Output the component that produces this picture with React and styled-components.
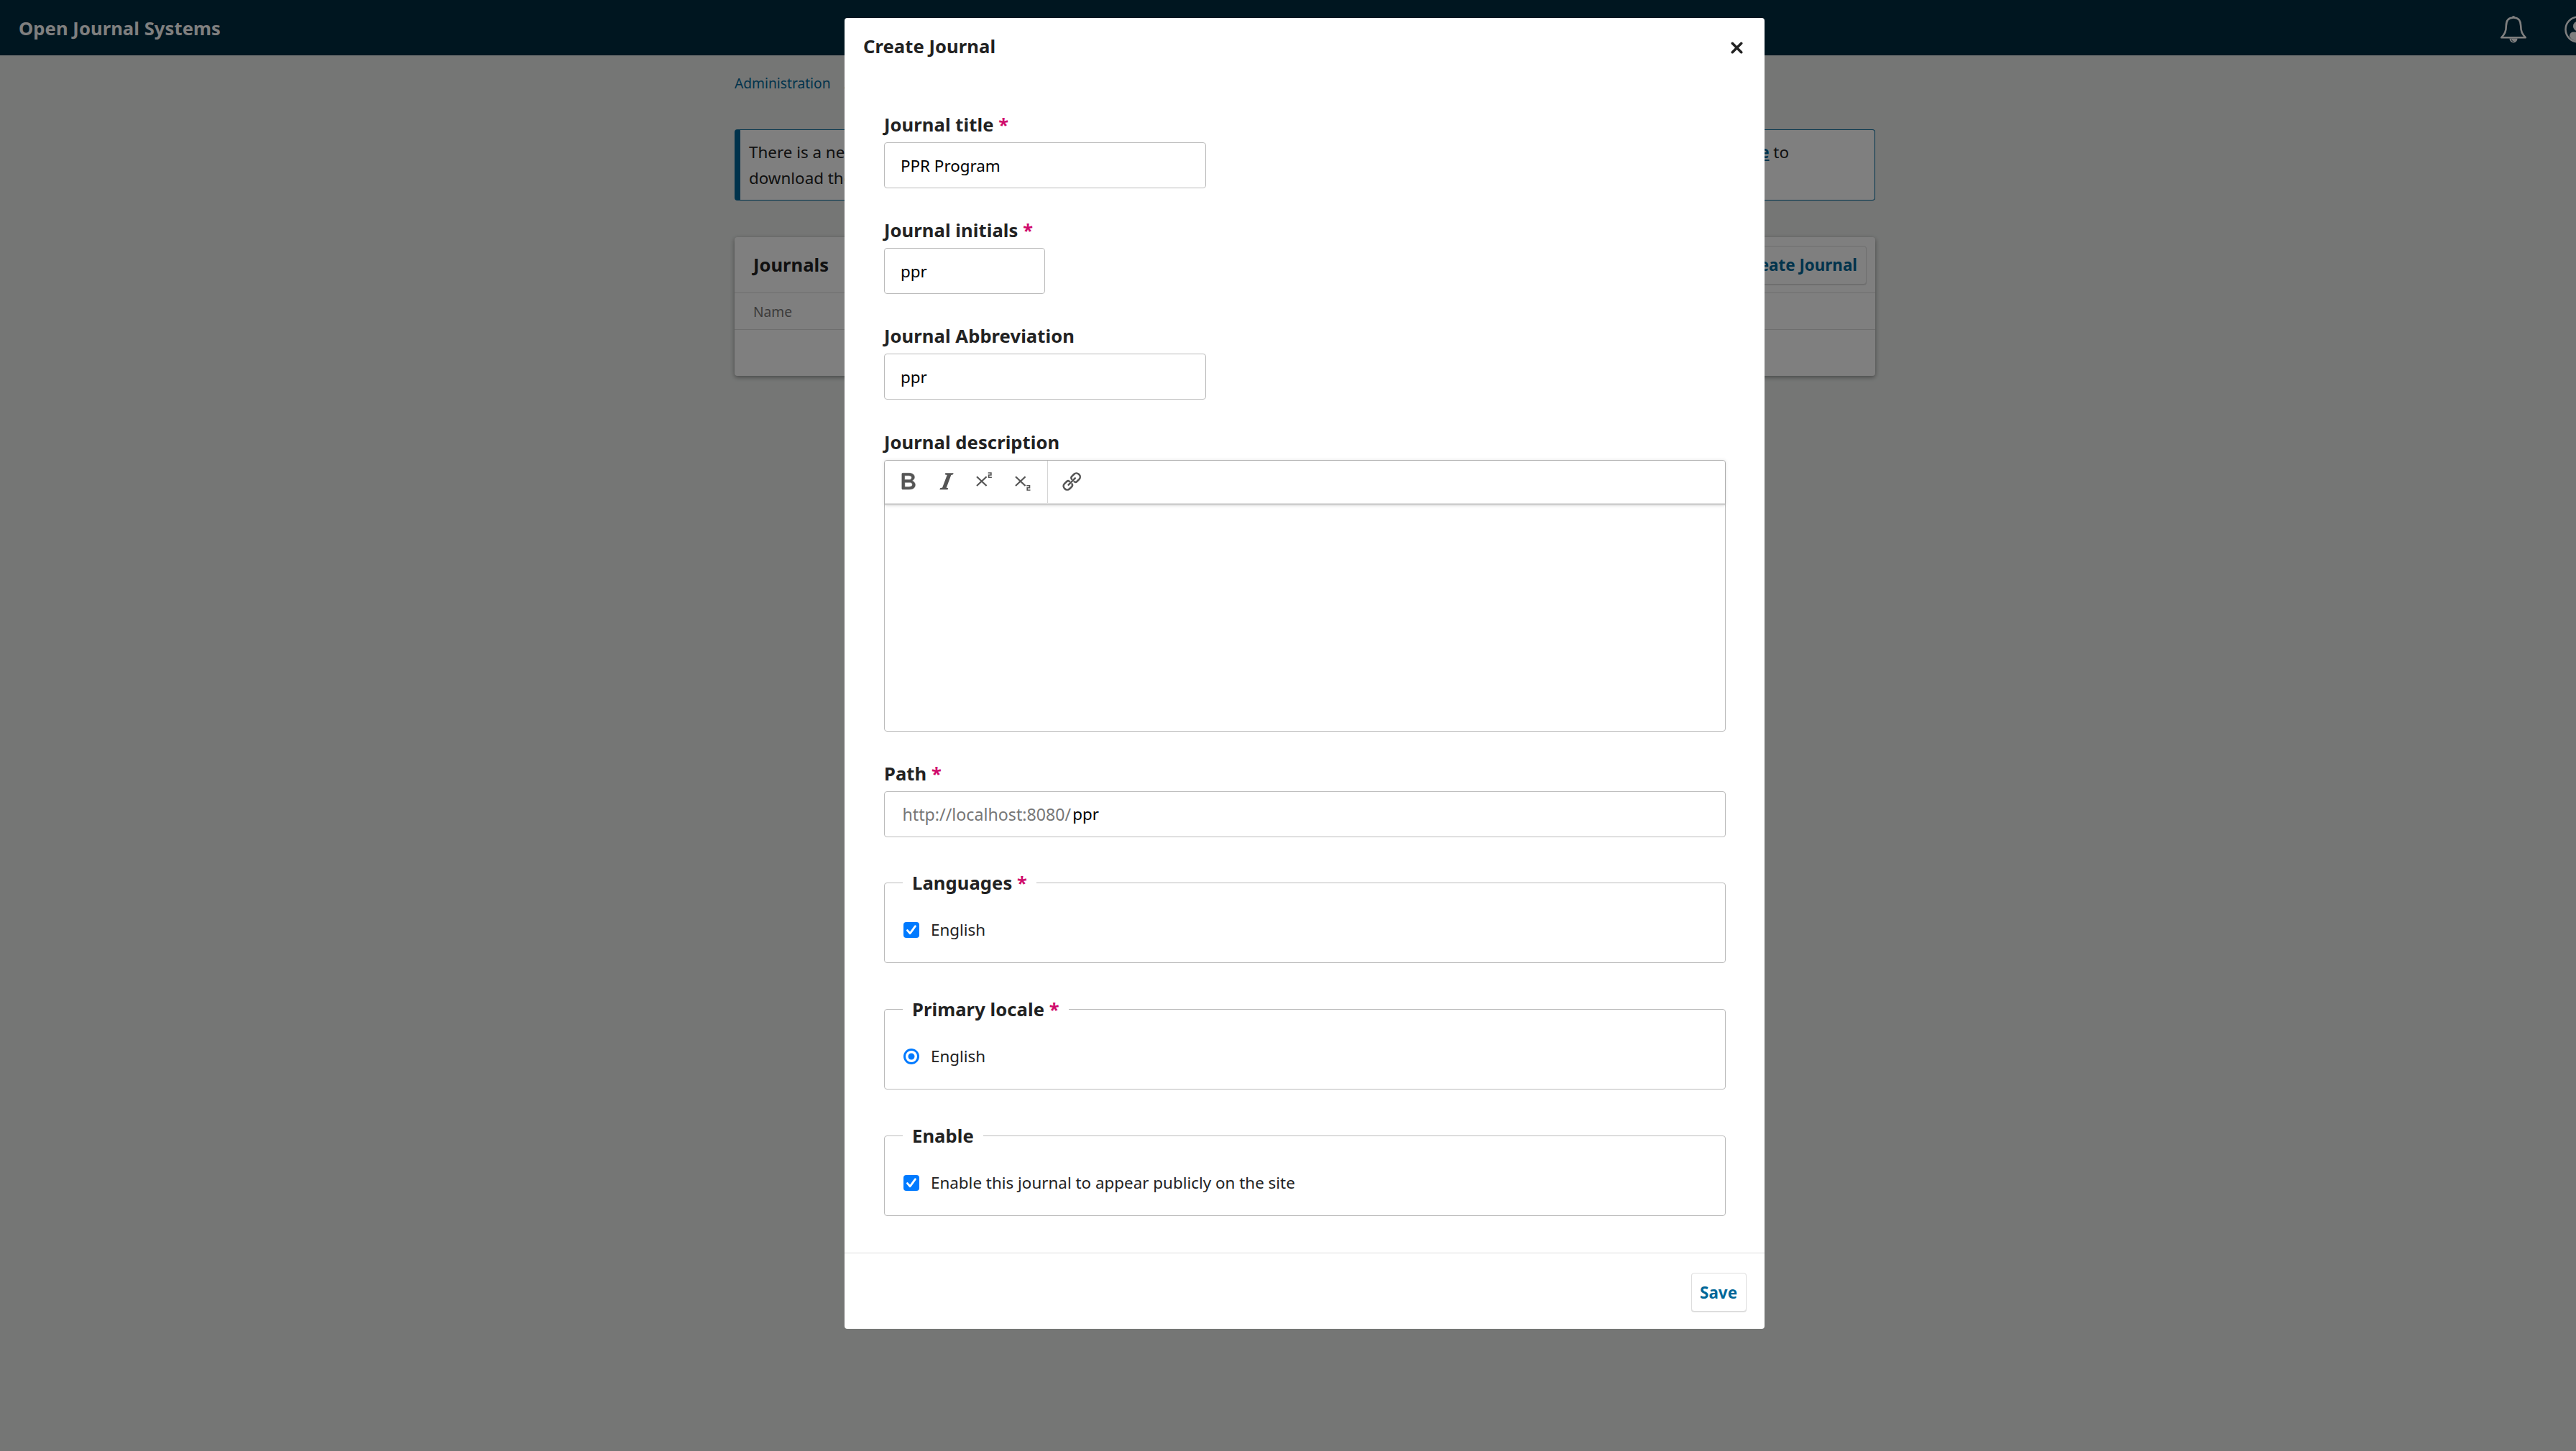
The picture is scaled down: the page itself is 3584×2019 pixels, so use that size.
import React from 'react';
import styled, { createGlobalStyle } from 'styled-components';

const GlobalStyle = createGlobalStyle`
  * {
    box-sizing: border-box;
  }
  body {
    margin: 0;
    font-family: "Noto Sans", sans-serif;
    font-size: 22.4px;
    line-height: 36px;
    color: #222;
    overflow: hidden;
  }
`

// Page
const Page = styled.div`
  position: relative;
  width: 3631px;
  height: 2019px;
  background: #eaedeb;
`
const TopBar = styled.header`
  display: flex;
  align-items: center;
  justify-content: space-between;
  height: 77px;
  padding: 2px 25px 0 26px;
  background: #002c40;
  color: #fff;
`
const AppName = styled.div`
  font-size: 25.6px;
  font-weight: 700;
  letter-spacing: 0.07px;
`
const TopActions = styled.div`
  display: flex;
  align-items: center;
  gap: 52px;
  padding-top: 2px;
`
const Content = styled.main`
  width: 1587px;
  margin: 0 auto;
`
const Breadcrumb = styled.nav`
  display: flex;
  gap: 19px;
  padding-top: 21px;
  height: 103px;
  font-size: 19.2px;
  a {
    color: #006798;
  }
`
const Notice = styled.section`
  height: 99px;
  padding: 13px 14px 0 12px;
  border: 1px solid #006798;
  border-left-width: 8px;
  border-radius: 4px;
  background: #fff;
`
const NoticeLine = styled.div`
  display: flex;
  justify-content: space-between;
  width: 1447px;
  a {
    color: #006798;
    font-weight: 700;
    text-decoration: underline;
  }
`
const Panel = styled.section`
  margin-top: 51px;
  height: 193px;
  border-radius: 4px;
  background: #fff;
  box-shadow: 0 2px 6px rgba(0,0,0,0.4);
`
const PanelHeader = styled.div`
  display: flex;
  align-items: center;
  justify-content: space-between;
  height: 78px;
  padding: 0 12px 0 26px;
  border-bottom: 1px solid #ddd;
  h2 {
    margin: 0;
    font-size: 25.6px;
  }
`
const PanelColumns = styled.div`
  height: 51px;
  padding: 8px 26px;
  border-bottom: 1px solid #ddd;
  font-size: 19.2px;
  color: #777;
`
const Button = styled.button`
  height: 54px;
  padding: 0 12px 0 11px;
  border: 1px solid #ddd;
  border-radius: 4px;
  background: #fff;
  box-shadow: 0 1px 0 #ddd;
  color: #006798;
  font: 700 22.4px "Noto Sans", sans-serif;
`

// Modal
const Overlay = styled.div`
  position: absolute;
  inset: 0;
  display: flex;
  justify-content: center;
  align-items: flex-start;
  padding: 25px 1px 0 0;
  background: rgba(0,0,0,0.5);
`
const Dialog = styled.div`
  width: 1280px;
  height: 1824px;
  border-radius: 4px;
  background: #fff;
`
const DialogHeader = styled.div`
  display: flex;
  justify-content: space-between;
  align-items: center;
  height: 80px;
  padding: 0 30px 0 26px;
  font-size: 25.6px;
  font-weight: 700;
  letter-spacing: 0.07px;
  svg {
    margin-top: 2px;
  }
`
const Form = styled.form`
  height: 1638px;
  padding: 51px 54px 0 55px;
`
const Field = styled.div`
  height: ${p => p.$height || 147.2}px;
`
const Label = styled.label`
  display: block;
  height: 42px;
  line-height: 35.2px;
  font-size: 25.6px;
  font-weight: 700;
  letter-spacing: 0.07px;
`
const Star = styled.span`
  color: #d00a6c;
`
const Text = styled.input`
  display: block;
  width: ${p => p.$width}px;
  height: 64px;
  padding: 0 22px;
  border: 1px solid #bbb;
  border-radius: 4px;
  background: #fff;
  color: #000;
  font: 22.4px "Noto Sans", sans-serif;
`
const PathBox = styled.div`
  display: flex;
  align-items: center;
  height: 64px;
  padding: 0 24.5px;
  border: 1px solid #bbb;
  border-radius: 4px;
  font-size: 23.2px;
  color: #777;
  span {
    margin-left: 2px;
    font-size: 22.4px;
    color: #000;
  }
`
const Editor = styled.div`
  height: 378px;
  border: 1px solid #bbb;
  border-radius: 4px;
`
const Toolbar = styled.div`
  display: flex;
  height: 62px;
  border-bottom: 1px solid #bbb;
  box-shadow: 0 0 5px rgba(0,0,0,0.16), inset 0 -2px 0 #e0e0e0;
`
const ToolGroup = styled.div`
  display: flex;
  height: 59px;
  padding: 0 6px;
  border-right: ${p => p.$last ? '0' : '1px solid #d5d5d5'};
`
const Tool = styled.span`
  display: flex;
  align-items: center;
  justify-content: center;
  width: 53.4px;
  color: #555;
`
const Fieldset = styled.fieldset`
  height: 129.4px;
  margin: 0 0 46.6px;
  padding: 0 0 0 25px;
  border: 1px solid #bbb;
  border-radius: 4px;
`
const Legend = styled.legend`
  height: 36px;
  padding: 0 13px;
  font-size: 25.6px;
  font-weight: 700;
  letter-spacing: 0.07px;
`
const Option = styled.label`
  display: flex;
  align-items: center;
  gap: 16px;
  padding: 29.4px 0 0 1px;
`
const Footer = styled.div`
  display: flex;
  justify-content: flex-end;
  padding: 27px 25px 0;
  height: 106px;
  border-top: 1px solid #ddd;
`

// Icons
const Bell = () => (
  <svg width="38" height="40" viewBox="0 0 38 40" fill="none" stroke="#fff" strokeWidth="2.6">
    <path d="M19 3.5C11 3.5 8.8 9 8.8 15c0 8-2 11.5-6.6 16.3h33.6C31.2 26.5 29.2 23 29.2 15c0-6-2.200-11.500-10.200-11.500Z" strokeLinejoin="round" />
    <path d="M17 3a2 2 0 0 1 4 0v1h-4Z" fill="#fff" stroke="none" />
    <path d="M13.5 32.5h11a5.5 6 0 0 1-11 0Z" fill="#fff" stroke="none" />
    <path d="M16.3 34c.3 1.600 1.200 2.500 2.700 2.700" stroke="#002c40" strokeWidth="1" />
  </svg>
)
const Avatar = () => (
  <svg width="38" height="38" viewBox="0 0 38 38">
    <circle cx="19" cy="19" r="17.5" fill="none" stroke="#fff" strokeWidth="2.500" />
    <path d="M7 29c0-4 2-6.500 5.500-6.500h13c3.500 0 5.500 2.500 5.500 6.500-3 4-7.500 6.500-12 6.500S10 33 7 29Z" fill="#fff" />
    <circle cx="19" cy="14.5" r="7" fill="#fff" />
  </svg>
)
const Close = () => (
  <svg width="17" height="17" viewBox="0 0 17 17" fill="none" stroke="currentColor" strokeWidth="3.6" strokeLinecap="round">
    <path d="m2.300 2.300 12.400 12.400M14.700 2.300 2.300 14.700" />
  </svg>
)
const Bold = () => (
  <svg width="40" height="40" viewBox="0 0 40 40" fill="currentColor" stroke="currentColor" strokeWidth="0.3">
    <path transform="translate(-1 0.2) scale(1.687 1.62)" d="M7.800 19c-.3 0-.5 0-.6-.2l-.2-.5V5.700c0-.2 0-.4.2-.5l.6-.2h5c1.500 0 2.700.3 3.500 1 .7.6 1.100 1.400 1.100 2.500a3 3 0 0 1-.6 1.900c-.4.6-1 1-1.600 1.200.4.1.9.3 1.300.6s.8.7 1 1.200c.4.4.5 1 .5 1.600 0 1.300-.4 2.300-1.300 3-.8.7-2.100 1-3.800 1H7.800Zm5-8.300c.6 0 1.200-.1 1.600-.5.4-.3.6-.7.6-1.300 0-1.100-.8-1.700-2.300-1.700H9.300v3.500h3.400Zm.5 6c.7 0 1.300-.1 1.700-.4.4-.4.6-.9.6-1.500s-.2-1-.7-1.400c-.4-.3-1-.4-2-.4H9.400v3.800h4Z" fillRule="evenodd" />
  </svg>
)
const Italic = () => (
  <svg width="40" height="40" viewBox="0 0 40 40" fill="currentColor">
    <path d="M18.300 8.300h11.300l-.6 2-2.700.7-6.600 17.700 2.400.6-.5 1.900H10.400l.6-1.900 3.100-.7L20.700 11l-3-.7Z" />
  </svg>
)
const Script = ({ low }) => (
  <svg width="40" height="40" viewBox="0 0 40 40" fill="none" stroke="currentColor" strokeWidth="2.2">
    <path d="m9 13.200 13.600 12.800M22.600 13.200 9 26" />
    <path transform={low ? 'translate(-.4 17.800)' : undefined} d="M24.700 8h4.200v3h-3.300v3.200h4.300" strokeWidth="1.600" />
  </svg>
)
const Link = () => (
  <svg width="40" height="40" viewBox="0 0 40 40" fill="none" stroke="currentColor" strokeWidth="2.500" strokeLinecap="round">
    <g transform="translate(21.2 20) rotate(-45)">
      <path d="M-2.200-2.600a3 3 0 0 0-2.800-2.400H-9.500a4.500 4.500 0 0 0-4.500 4.500v1a4.500 4.500 0 0 0 4.500 4.500H-5a3 3 0 0 0 2.800-2.400" />
      <path d="M2.200-2.600A3 3 0 0 1 5-5H9.500A4.500 4.500 0 0 1 14-.5v1A4.500 4.500 0 0 1 9.500 5H5a3 3 0 0 1-2.800-2.400" />
      <path d="M-6.500 0h13" />
    </g>
  </svg>
)
const Check = () => (
  <svg width="22" height="22" viewBox="0 0 22 22">
    <rect width="22" height="22" rx="4" fill="#007aff" />
    <path d="m5.500 11.600 3.700 4.200 7.200-10" fill="none" stroke="#fff" strokeWidth="2.800" strokeLinecap="round" strokeLinejoin="round" />
  </svg>
)
const Radio = () => (
  <svg width="22" height="22" viewBox="0 0 22 22">
    <circle cx="11" cy="11" r="9.500" fill="#fff" stroke="#007aff" strokeWidth="3" />
    <circle cx="11" cy="11" r="4.500" fill="#007aff" />
  </svg>
)

// Components
const Required = () => <Star> *</Star>;

const TextField = ({ label, value, width, required }) => (
  <Field>
    <Label>{label}{required && <Required />}</Label>
    <Text type="text" $width={width} defaultValue={value} />
  </Field>
);

const OptionSet = ({ legend, option, required, radio }) => (
  <Fieldset>
    <Legend>{legend}{required && <Required />}</Legend>
    <Option>{radio ? <Radio /> : <Check />}{option}</Option>
  </Fieldset>
);

const CreateJournal = () => (
  <Dialog>
    <DialogHeader>
      Create Journal
      <Close />
    </DialogHeader>
    <Form>
      <TextField label="Journal title" value="PPR Program" width={448} required />
      <TextField label="Journal initials" value="ppr" width={224} required />
      <TextField label="Journal Abbreviation" value="ppr" width={448} />
      <Field $height={461}>
        <Label>Journal description</Label>
        <Editor>
          <Toolbar>
            <ToolGroup>
              <Tool><Bold /></Tool>
              <Tool><Italic /></Tool>
              <Tool><Script /></Tool>
              <Tool><Script low /></Tool>
            </ToolGroup>
            <ToolGroup $last>
              <Tool><Link /></Tool>
            </ToolGroup>
          </Toolbar>
        </Editor>
      </Field>
      <Field $height={152.4}>
        <Label>Path<Required /></Label>
        <PathBox>http://localhost:8080/<span>ppr</span></PathBox>
      </Field>
      <OptionSet legend="Languages" option="English" required />
      <OptionSet legend="Primary locale" option="English" required radio />
      <OptionSet legend="Enable" option="Enable this journal to appear publicly on the site" />
    </Form>
    <Footer>
      <Button>Save</Button>
    </Footer>
  </Dialog>
);

const App = () => (
  <>
    <GlobalStyle />
    <Page>
      <TopBar>
        <AppName>Open Journal Systems</AppName>
        <TopActions>
          <Bell />
          <Avatar />
        </TopActions>
      </TopBar>
      <Content>
        <Breadcrumb><a>Administration</a><span>/</span></Breadcrumb>
        <Notice>
          <NoticeLine><span>There is a new</span><span><a>page</a> to</span></NoticeLine>
          <NoticeLine><span>download the</span></NoticeLine>
        </Notice>
        <Panel>
          <PanelHeader>
            <h2>Journals</h2>
            <Button>Create Journal</Button>
          </PanelHeader>
          <PanelColumns>Name</PanelColumns>
        </Panel>
      </Content>
      <Overlay>
        <CreateJournal />
      </Overlay>
    </Page>
  </>
);

export default App;
